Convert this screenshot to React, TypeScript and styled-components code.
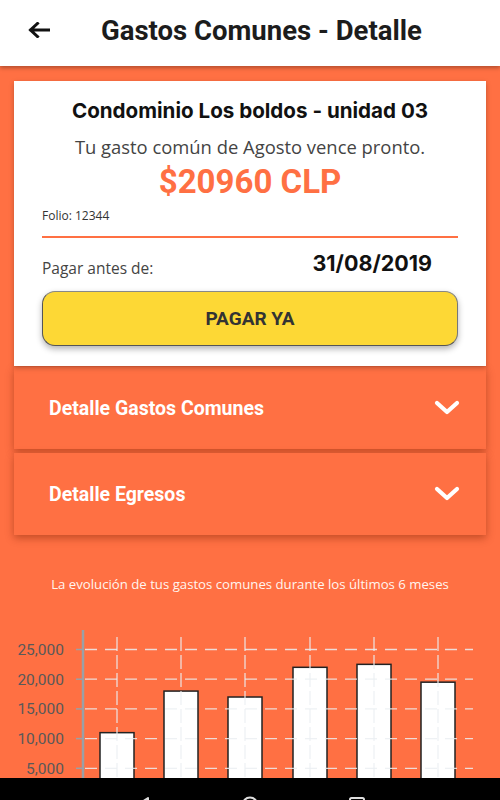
import React from "react";
import styled, { createGlobalStyle } from "styled-components";

const GlobalStyle = createGlobalStyle`
  html, body { margin: 0; padding: 0; background: #FF7043; overflow: hidden; }
  * { box-sizing: border-box; }
`;

const ORANGE = "#FF7043";

const Page = styled.div`
  width: 500px;
  height: 800px;
  display: flex;
  flex-direction: column;
  background: ${ORANGE};
  font-family: Roboto, "Liberation Sans", sans-serif;
  overflow: hidden;
`;

const Header = styled.header`
  height: 66px;
  flex: 0 0 66px;
  background: #fff;
  display: flex;
  align-items: center;
  padding-left: 27px;
  padding-bottom: 6px;
  box-shadow: 0 2px 4px rgba(0, 0, 0, 0.3);
  position: relative;
  z-index: 2;
`;

const BackButton = styled.button`
  border: 0;
  background: none;
  padding: 0;
  width: 24px;
  height: 24px;
  display: flex;
  align-items: center;
  justify-content: center;
`;

const Title = styled.h1`
  margin: 0 0 0 50px;
  font-size: 27.5px;
  font-weight: 700;
  color: #1c1c1c;
`;

const Main = styled.main`
  padding: 15px 14px 0;
  display: flex;
  flex-direction: column;
`;

const Card = styled.section`
  background: #fff;
  padding: 18px 28px 20px;
  display: flex;
  flex-direction: column;
  box-shadow: 0 2px 5px rgba(0, 0, 0, 0.25);
  position: relative;
  z-index: 1;
`;

const CardTitle = styled.h2`
  margin: 0;
  text-align: center;
  font-family: Inter, Roboto, sans-serif;
  font-size: 20.6px;
  line-height: 24px;
  font-weight: 700;
  color: #111;
`;

const Notice = styled.p`
  margin: 12px 0 0;
  text-align: center;
  font-family: "Open Sans", Lato, sans-serif;
  font-size: 18.4px;
  line-height: 24px;
  color: #444;
`;

const Amount = styled.div`
  margin-top: 3px;
  text-align: center;
  font-size: 33px;
  line-height: 40px;
  font-weight: 700;
  color: ${ORANGE};
`;

const Folio = styled.div`
  font-family: "Open Sans", Lato, sans-serif;
  font-size: 12px;
  line-height: 16px;
  color: #333;
  margin-top: 6px;
`;

const Divider = styled.hr`
  border: 0;
  height: 2px;
  background: ${ORANGE};
  margin: 12px 0 0;
`;

const DueRow = styled.div`
  display: flex;
  justify-content: space-between;
  align-items: flex-end;
  margin-top: 14px;
  padding-right: 26px;
`;

const DueLabel = styled.span`
  font-family: "Open Sans", Lato, sans-serif;
  font-size: 15.5px;
  color: #444;
  line-height: 20px;
`;

const DueDate = styled.span`
  font-family: Inter, Roboto, sans-serif;
  font-size: 21.5px;
  font-weight: 700;
  color: #111;
  line-height: 26px;
  position: relative;
  top: -2px;
`;

const PayButton = styled.button`
  margin-top: 13px;
  height: 55px;
  border: 1px solid #555;
  border-radius: 13px;
  background: #FDD835;
  font-family: Roboto, "Liberation Sans", sans-serif;
  font-size: 19px;
  font-weight: 700;
  color: #333;
  box-shadow: 0 3px 6px rgba(0, 0, 0, 0.3);
  border-top-color: #888;
  border-right-color: #777;
`;

const Accordion = styled.div<{ $first?: boolean }>`
  height: 82px;
  margin-top: ${(p) => (p.$first ? "1px" : "4px")};
  background: ${ORANGE};
  display: flex;
  align-items: center;
  justify-content: space-between;
  padding: 0 26px 0 35px;
  box-shadow: 0 3px 8px rgba(120, 30, 0, 0.45);
  position: relative;
`;

const AccordionLabel = styled.span`
  color: #fff;
  font-size: 19.5px;
  font-weight: 700;
`;

const Caption = styled.p`
  margin: 40px 0 0;
  text-align: center;
  font-family: "Open Sans", Lato, sans-serif;
  font-size: 13.2px;
  color: #fff5ef;
`;

const ChartBox = styled.div`
  margin: 6px -14px 0;
  height: 200px;
`;

const NavBar = styled.nav`
  position: fixed;
  left: 0;
  top: 778px;
  width: 500px;
  height: 48px;
  background: #000;
  display: flex;
  justify-content: space-around;
  align-items: flex-start;
  padding: 18px 90px 0;
  z-index: 5;
`;

const Chevron = () => (
  <svg width="26" height="16" viewBox="0 0 26 16">
    <path d="M3 3 L13 12 L23 3" fill="none" stroke="#fff" strokeWidth="4.2" strokeLinecap="round" strokeLinejoin="round" />
  </svg>
);

const BackArrow = () => (
  <svg width="22" height="16" viewBox="0 0 22 16">
    <path d="M21 8 H3 M9.5 1.5 L2.5 8 L9.5 14.5" fill="none" stroke="#111" strokeWidth="3" strokeLinecap="square" />
  </svg>
);

const bars = [
  { cx: 117, v: 11000 },
  { cx: 181, v: 18000 },
  { cx: 245, v: 17000 },
  { cx: 310, v: 22000 },
  { cx: 374, v: 22500 },
  { cx: 438, v: 19500 },
];
const ticks = [25000, 20000, 15000, 10000, 5000];
const yOf = (v: number) => 799 - (v / 5000) * 29.7;

const Chart = () => (
  <svg width="500" height="200" viewBox="0 600 500 200">
    <line x1="83" y1="631" x2="83" y2="800" stroke="#9aa0a6" strokeWidth="2.5" />
    {ticks.map((t) => (
      <g key={t}>
        <text x="64" y={yOf(t) + 5.5} textAnchor="end" fontFamily="Roboto, sans-serif" fontSize="15.5" fill="#595959">
          {t.toLocaleString("en-US")}
        </text>
        <line x1="76" y1={yOf(t)} x2="83" y2={yOf(t)} stroke="#9aa0a6" strokeWidth="1.5" />
      </g>
    ))}
    {bars.map((b) => (
      <rect key={b.cx} x={b.cx - 17} y={yOf(b.v)} width="34" height={800 - yOf(b.v) + 10} fill="#fff" stroke="#222" strokeWidth="1.5" />
    ))}
    {ticks.map((t) => (
      <line key={"h" + t} x1="85" y1={yOf(t)} x2="473" y2={yOf(t)} stroke="rgba(235,238,242,0.85)" strokeWidth="1.3" strokeDasharray="12 8" />
    ))}
    {bars.map((b) => (
      <line key={"v" + b.cx} x1={b.cx} y1="638" x2={b.cx} y2="800" stroke="rgba(235,238,242,0.85)" strokeWidth="1.3" strokeDasharray="14 4" />
    ))}
  </svg>
);

const NavBack = () => (
  <svg width="18" height="18" viewBox="0 0 18 18">
    <path d="M14 2 L3 9 L14 16 Z" fill="none" stroke="#ddd" strokeWidth="2" strokeLinejoin="round" />
  </svg>
);
const NavHome = () => (
  <svg width="18" height="18" viewBox="0 0 18 18">
    <circle cx="9" cy="9" r="7.5" fill="none" stroke="#ddd" strokeWidth="2" />
  </svg>
);
const NavRecent = () => (
  <svg width="18" height="18" viewBox="0 0 18 18">
    <rect x="2" y="2" width="14" height="14" rx="1.5" fill="none" stroke="#ddd" strokeWidth="2" />
  </svg>
);

export default function App() {
  return (
    <>
      <GlobalStyle />
      <Page>
        <Header>
          <BackButton aria-label="Volver">
            <BackArrow />
          </BackButton>
          <Title>Gastos Comunes - Detalle</Title>
        </Header>
        <Main>
          <Card>
            <CardTitle>Condominio Los boldos - unidad 03</CardTitle>
            <Notice>Tu gasto común de Agosto vence pronto.</Notice>
            <Amount>$20960 CLP</Amount>
            <Folio>Folio: 12344</Folio>
            <Divider />
            <DueRow>
              <DueLabel>Pagar antes de:</DueLabel>
              <DueDate>31/08/2019</DueDate>
            </DueRow>
            <PayButton>PAGAR YA</PayButton>
          </Card>
          <Accordion $first>
            <AccordionLabel>Detalle Gastos Comunes</AccordionLabel>
            <Chevron />
          </Accordion>
          <Accordion>
            <AccordionLabel>Detalle Egresos</AccordionLabel>
            <Chevron />
          </Accordion>
          <Caption>La evolución de tus gastos comunes durante los últimos 6 meses</Caption>
          <ChartBox>
            <Chart />
          </ChartBox>
        </Main>
        <NavBar>
          <NavBack />
          <NavHome />
          <NavRecent />
        </NavBar>
      </Page>
    </>
  );
}
